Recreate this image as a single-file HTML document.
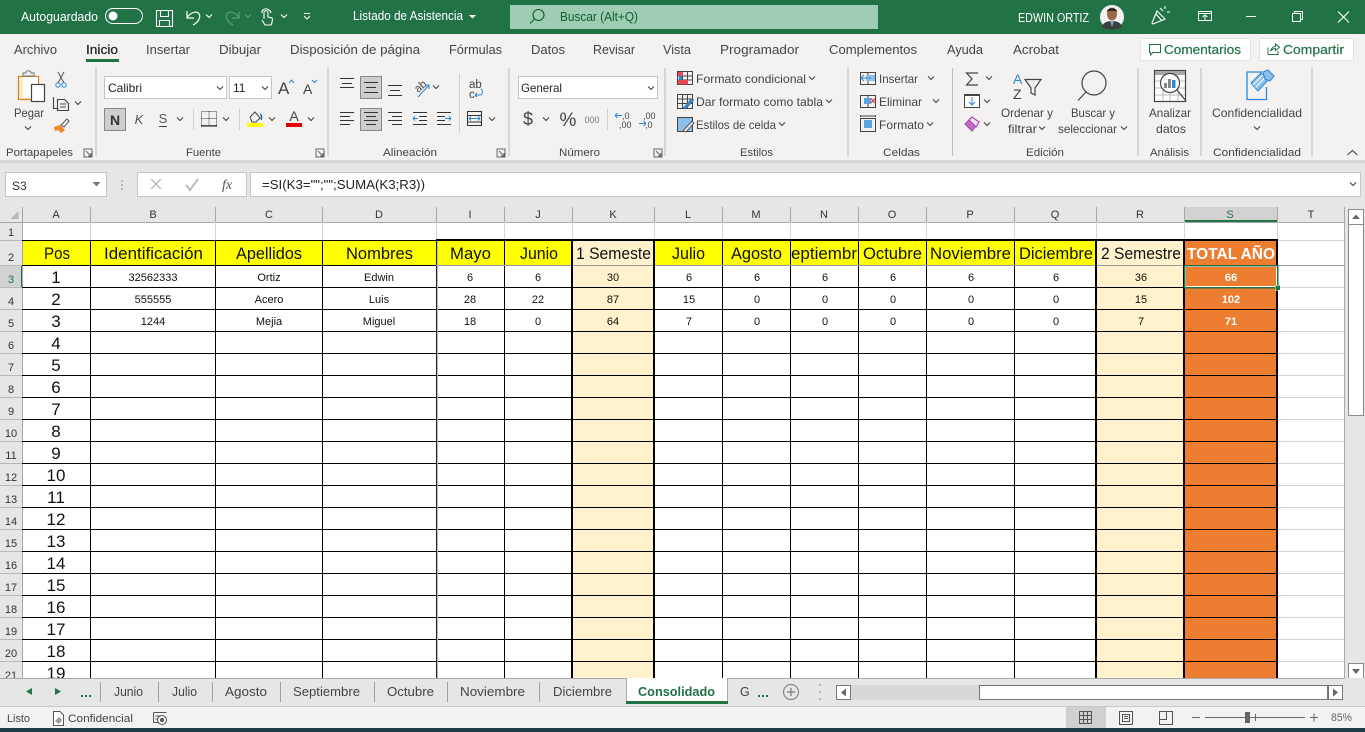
<!DOCTYPE html>
<html lang="es"><head><meta charset="utf-8"><title>Listado de Asistencia</title>
<style>
html,body{margin:0;padding:0;background:#f3f2f1;overflow:hidden}
svg{display:block;font-family:"Liberation Sans",sans-serif}
.r{font-size:12px;fill:#444}
.g{font-size:11px;fill:#444}
.t{font-size:12.5px;fill:#444}
.w{font-size:12.5px;fill:#fff}
.h{font-size:17px;fill:#111}
.d{font-size:11px;fill:#111;text-anchor:middle}
.n{font-size:17px;fill:#111;text-anchor:middle}
.c{font-size:11px;fill:#333;text-anchor:middle}
.s{font-size:12.5px;fill:#444}
</style></head><body>
<svg width="1365" height="732" viewBox="0 0 1365 732" xmlns="http://www.w3.org/2000/svg">
<defs>
<path id="ch" d="M-3 -1.5L0 1.5L3 -1.5" fill="none" stroke="#444" stroke-width="1.1"/>
<path id="chw" d="M-3 -1.5L0 1.5L3 -1.5" fill="none" stroke="#fff" stroke-width="1.1"/>
<path id="lau" d="M0 0H8V8H0ZM2 2L7 7M7 4V7H4" fill="none" stroke="#666" stroke-width="1"/>
<clipPath id="gc"><rect x="0" y="207" width="1345" height="471"/></clipPath>
</defs>

<!-- title bar -->
<rect width="1365" height="34" fill="#217346"/>
<text x="21" y="21" class="w" textLength="77" lengthAdjust="spacingAndGlyphs">Autoguardado</text>
<rect x="105.500" y="8.500" width="37" height="15" rx="7.500" fill="none" stroke="#fff"/>
<circle cx="113" cy="16" r="4.500" fill="#fff"/>
<path d="M156.500 10.500H172.500V26.500H156.500ZM160.500 10.500V16.500H168.500V10.500M159.500 26.500V20.500H169.500V26.500" fill="none" stroke="#fff" stroke-width="1.100"/>
<path d="M187 11V18H194M187 17.500C191 12 198 10 199.500 15C200.500 19 197 23 193 25" fill="none" stroke="#fff" stroke-width="1.200"/>
<use href="#chw" x="209" y="16"/>
<path d="M239 12V18H232M239 17.500C235 12 228 10 226.500 15C225.500 19 229 23 233 25" fill="none" stroke="#5f9e7b" stroke-width="1.200"/>
<path d="M245 14.500L248 17.500L251 14.500" fill="none" stroke="#5f9e7b"/>
<path d="M264 19V12.500C264 10 268 10 268 12.500V17L272 18C273 19 272 23 271 25H265L262 20M262 13C261 8 270 7 271 13" fill="none" stroke="#fff" stroke-width="1.100"/>
<use href="#chw" x="284" y="16"/>
<path d="M304 13.500H310M304 16L307 19L310 16" fill="none" stroke="#fff"/>
<text x="353" y="20" class="w" textLength="110" lengthAdjust="spacingAndGlyphs">Listado de Asistencia</text>
<path d="M469 15H476L472.500 18.500Z" fill="#fff"/>
<rect x="510" y="5" width="368" height="24" fill="#9fcdb3"/>
<circle cx="538.500" cy="15" r="5.500" fill="none" stroke="#0e5c2f" stroke-width="1.100"/>
<path d="M534.500 19L530 23.500" stroke="#0e5c2f" stroke-width="1.100"/>
<text x="560" y="21" style="font-size:12.5px;fill:#0e5c2f" textLength="78" lengthAdjust="spacingAndGlyphs">Buscar (Alt+Q)</text>
<text x="1018" y="22" class="w" textLength="71" lengthAdjust="spacingAndGlyphs">EDWIN ORTIZ</text>
<circle cx="1112" cy="17" r="12" fill="#f2f2f2"/>
<path d="M1102 27C1103 22 1108 21 1112 21C1116 21 1121 22 1122 27C1116 30 1108 30 1102 27Z" fill="#3d3f3f"/>
<path d="M1110 21L1112 27L1114 21Z" fill="#7aa3cf"/>
<ellipse cx="1112" cy="14" rx="5" ry="6.500" fill="#9a6a48"/>
<path d="M1107 12C1107 7 1117 7 1117 12C1114 10 1110 10 1107 12Z" fill="#1d1a18"/>
<path d="M1152 23L1157 11L1165 19L1153 24ZM1160 8L1163 11M1165 6V9M1167 12H1170M1156 14L1162 21" fill="none" stroke="#fff" stroke-width="1.100"/>
<path d="M1198.500 11.500H1211.500V20.500H1198.500ZM1198.500 13.500H1211.500M1205 20V15M1202.500 17L1205 15L1207.500 17" fill="none" stroke="#fff"/>
<path d="M1246 16.500H1256" stroke="#fff"/>
<path d="M1292.500 13.500H1300.500V21.500H1292.500ZM1294.500 13V11.500H1302.500V19.500H1301" fill="none" stroke="#fff"/>
<path d="M1338 11.500L1349 22.500M1349 11.500L1338 22.500" stroke="#fff" stroke-width="1.100"/>

<!-- ribbon -->
<rect y="34" width="1365" height="126" fill="#f3f2f1"/>
<rect y="160" width="1365" height="47" fill="#e6e6e6"/>
<rect y="160" width="1365" height="3" fill="#d6d6d6"/>
<g class="t">
<text x="14" y="54" textLength="43" lengthAdjust="spacingAndGlyphs">Archivo</text>
<text x="86" y="54" textLength="32" lengthAdjust="spacingAndGlyphs" style="fill:#222;stroke:#222;stroke-width:.25">Inicio</text>
<text x="146" y="54" textLength="44" lengthAdjust="spacingAndGlyphs">Insertar</text>
<text x="219" y="54" textLength="42" lengthAdjust="spacingAndGlyphs">Dibujar</text>
<text x="290" y="54" textLength="130" lengthAdjust="spacingAndGlyphs">Disposición de página</text>
<text x="449" y="54" textLength="53" lengthAdjust="spacingAndGlyphs">Fórmulas</text>
<text x="531" y="54" textLength="34" lengthAdjust="spacingAndGlyphs">Datos</text>
<text x="593" y="54" textLength="42" lengthAdjust="spacingAndGlyphs">Revisar</text>
<text x="663" y="54" textLength="28" lengthAdjust="spacingAndGlyphs">Vista</text>
<text x="720" y="54" textLength="79" lengthAdjust="spacingAndGlyphs">Programador</text>
<text x="829" y="54" textLength="88" lengthAdjust="spacingAndGlyphs">Complementos</text>
<text x="947" y="54" textLength="36" lengthAdjust="spacingAndGlyphs">Ayuda</text>
<text x="1013" y="54" textLength="46" lengthAdjust="spacingAndGlyphs">Acrobat</text>
</g>
<rect x="86" y="59" width="33" height="3" fill="#217346"/>
<rect x="1140.500" y="38.500" width="110" height="22" rx="1" fill="#fff" stroke="#e3e2e1"/>
<path d="M1149.500 44.500H1160.500V52.500H1153L1150.500 55V52.500H1149.500Z" fill="none" stroke="#217346"/>
<text x="1164" y="54" style="font-size:12.5px;fill:#217346;stroke:#217346;stroke-width:.2" textLength="77" lengthAdjust="spacingAndGlyphs">Comentarios</text>
<rect x="1259.500" y="38.500" width="94" height="22" rx="1" fill="#fff" stroke="#e3e2e1"/>
<path d="M1268 47.500V54.500H1278V51M1270.500 51C1271.500 48 1273.500 46.500 1275.500 46.500V44L1279.500 47.500L1275.500 50.500V48.500C1273.500 48.500 1272 49.500 1270.500 51Z" fill="none" stroke="#217346"/>
<text x="1283" y="54" style="font-size:12.5px;fill:#217346;stroke:#217346;stroke-width:.2" textLength="61" lengthAdjust="spacingAndGlyphs">Compartir</text>

<!-- group separators -->
<path d="M96 68V156M328 68V156M509 68V156M665 68V156M848 68V156M952.500 68V156M1138 68V156M1201 68V156M1312 68V156" stroke="#bdbcba" stroke-width="1"/>
<path d="M193.500 109V130M239.500 109V130M459.500 74V133M607.500 109V130" stroke="#d0cfcd"/>

<!-- Portapapeles -->
<rect x="18.500" y="76.500" width="20" height="23" fill="#fdeec5" stroke="#e07b1a" stroke-width="1.200"/>
<rect x="23" y="77" width="15" height="21" fill="#fff"/>
<path d="M23 76V73H26C26 70 31 70 31 73H34V76Z" fill="#f3f2f1" stroke="#777"/>
<rect x="31.500" y="84.500" width="13" height="17" fill="#fff" stroke="#444" stroke-width="1.200"/>
<text x="14" y="117" class="r" textLength="30" lengthAdjust="spacingAndGlyphs">Pegar</text>
<use href="#ch" x="28" y="128"/>
<path d="M58 72L64 83M64 72L58 83" stroke="#555"/>
<circle cx="58" cy="85" r="2.200" fill="none" stroke="#2b88d8"/><circle cx="64" cy="85" r="2.200" fill="none" stroke="#2b88d8"/>
<path d="M53.500 97V108.500H58.500M57.500 99.500H64.500L68.500 103.500V110.500H57.500ZM60 104H66M60 107H66" fill="none" stroke="#444" stroke-width="1.100"/>
<use href="#ch" x="78" y="103"/>
<path d="M54 127L60 125L65 130L61 133L58 130L55 131Z" fill="#f08a24"/>
<path d="M61 125L67 119L69 121L64 127Z" fill="#fff" stroke="#555"/>

<!-- Fuente -->
<rect x="104.500" y="76.500" width="122" height="22" fill="#fff" stroke="#c8c6c4"/>
<text x="108" y="92" class="r" textLength="34" lengthAdjust="spacingAndGlyphs" style="fill:#222">Calibri</text>
<use href="#ch" x="220" y="88"/>
<rect x="229.500" y="76.500" width="42" height="22" fill="#fff" stroke="#c8c6c4"/>
<text x="233" y="92" class="r" style="fill:#222">11</text>
<use href="#ch" x="265" y="88"/>
<text x="278" y="94" style="font-size:17px;fill:#444">A</text>
<path d="M289 83L291.500 80L294 83" fill="none" stroke="#2b88d8"/>
<text x="303" y="94" style="font-size:14px;fill:#444">A</text>
<path d="M312 80L314.500 82.500L317 80" fill="none" stroke="#2b88d8"/>
<rect x="104.500" y="108.500" width="21" height="22" fill="#cfcecc" stroke="#8a8886"/>
<text x="115" y="125" style="font-size:14px;font-weight:bold;fill:#333;text-anchor:middle">N</text>
<text x="139" y="124" style="font-size:13px;font-style:italic;fill:#555;text-anchor:middle">K</text>
<text x="163" y="123" style="font-size:13px;fill:#555;text-anchor:middle">S</text>
<path d="M159 126.500H167" stroke="#444"/>
<use href="#ch" x="180" y="119"/>
<path d="M201.500 111.500H216.500V125.500H201.500ZM209 111.500V125.500M201.500 118.500H216.500" fill="none" stroke="#444" stroke-dasharray="1 1"/>
<path d="M201 126H217" stroke="#111"/>
<use href="#ch" x="226" y="119"/>
<path d="M250 117L255 112L260 118L256 122H252Z" fill="none" stroke="#444"/>
<path d="M260 114C262 115 262 118 261 120" stroke="#2b6ca3" stroke-width="1.500" fill="none"/>
<rect x="247" y="123" width="16" height="4" fill="#ffff00"/>
<use href="#ch" x="272" y="119"/>
<text x="294" y="121" style="font-size:14px;fill:#444;text-anchor:middle">A</text>
<rect x="286" y="123" width="16" height="4" fill="#e60000"/>
<use href="#ch" x="311" y="119"/>
<use href="#lau" x="84" y="149"/><use href="#lau" x="316" y="149"/><use href="#lau" x="497" y="149"/><use href="#lau" x="654" y="149"/>

<!-- Alineación -->
<rect x="360.500" y="76.500" width="21" height="22" fill="#cfcecc" stroke="#8a8886"/>
<rect x="360.500" y="108.500" width="21" height="22" fill="#cfcecc" stroke="#8a8886"/>
<g stroke="#333" fill="none">
<path d="M340 78.500H354M342 83.500H352M340 87.500H354"/>
<path d="M364 82.500H378M366 87.500H376M364 92.500H378"/>
<path d="M388 85.500H402M390 90.500H400M388 95.500H402"/>
<path d="M340 112.500H354M340 116.500H350M340 120.500H354M340 124.500H350"/>
<path d="M364 112.500H378M366 116.500H376M364 120.500H378M366 124.500H376"/>
<path d="M388 112.500H402M392 116.500H402M388 120.500H402M392 124.500H402"/>
<path d="M419 116.500H427M419 120.500H427M413 112.500H427M413 124.500H427"/>
<path d="M437 116.500H445M437 120.500H445M437 112.500H451M437 124.500H451" transform="translate(0 0)"/>
<path d="M467.500 111.500H481.500V125.500H467.500ZM467.500 115.500H481.500M467.500 122H481.500"/>
</g>
<path d="M413 118.500H418M413 118.500L415 116.500M413 118.500L415 120.500M445 118.500H451M451 118.500L449 116.500M451 118.500L449 120.500M469 118.500H480M469 118.500L471 116.500M469 118.500L471 120.500M480 118.500L478 116.500M480 118.500L478 120.500" stroke="#2b88d8" fill="none"/>
<text x="414" y="90" transform="rotate(-40 420 86)" style="font-size:11px;fill:#444">ab</text>
<path d="M418 97L429 85M425 85H429V89" stroke="#2b88d8" fill="none"/>
<use href="#ch" x="436" y="87"/><use href="#ch" x="492" y="119"/>
<text x="469" y="88" style="font-size:11.500px;fill:#444">ab</text>
<text x="469" y="98" style="font-size:11.500px;fill:#444">c</text>
<path d="M475 95H480C483 95 483 90 481 89M475 95L477 93M475 95L477 97" stroke="#2b88d8" fill="none"/>

<!-- Número -->
<rect x="518.500" y="76.500" width="139" height="22" fill="#fff" stroke="#c8c6c4"/>
<text x="521" y="92" class="r" textLength="41" lengthAdjust="spacingAndGlyphs" style="fill:#222">General</text>
<use href="#ch" x="651" y="88"/>
<text x="528" y="125" style="font-size:18px;fill:#444;text-anchor:middle">$</text>
<use href="#ch" x="546" y="119"/>
<text x="568" y="126" style="font-size:19px;fill:#444;text-anchor:middle">%</text>
<text x="592" y="123" style="font-size:9px;fill:#777;text-anchor:middle">000</text>
<text x="622" y="119" style="font-size:9px;fill:#444">,0</text>
<text x="619" y="128" style="font-size:9px;fill:#444">,00</text>
<path d="M615 115.500H622M615 115.500L617.500 113M615 115.500L617.500 118" stroke="#2b88d8" fill="none"/>
<text x="643" y="119" style="font-size:9px;fill:#444">,00</text>
<text x="645" y="128" style="font-size:9px;fill:#444">,0</text>
<path d="M639 123.500H646M646 123.500L643.500 121M646 123.500L643.500 126" stroke="#2b88d8" fill="none"/>

<!-- Estilos -->
<path d="M677.500 71.500H692.500V84.500H677.500ZM677.500 76H692.500M677.500 80H692.500M682.500 71.500V84.500M687.500 71.500V84.500" fill="none" stroke="#444"/>
<rect x="678" y="72" width="5" height="4" fill="#e8484f"/><rect x="678" y="80" width="10" height="4.500" fill="#e8484f"/><rect x="679" y="76" width="3" height="4" fill="#2b88d8"/>
<path d="M677.500 94.500H692.500V108.500H677.500ZM677.500 99H692.500M677.500 103.500H692.500M682.500 94.500V108.500M687.500 94.500V108.500" fill="none" stroke="#444"/>
<path d="M683 108L692 98L694 100L686 109Z" fill="#2b88d8" stroke="#555" stroke-width=".5"/>
<rect x="677.500" y="117.500" width="15" height="14" fill="#8cc0ea" stroke="#444"/>
<path d="M683 131L692 121L694 123L686 132Z" fill="#f3f2f1" stroke="#555"/>
<text x="696" y="83" class="r" textLength="110" lengthAdjust="spacingAndGlyphs">Formato condicional</text><use href="#ch" x="812" y="78"/>
<text x="696" y="106" class="r" textLength="127" lengthAdjust="spacingAndGlyphs">Dar formato como tabla</text><use href="#ch" x="829" y="101"/>
<text x="696" y="129" class="r" textLength="80" lengthAdjust="spacingAndGlyphs">Estilos de celda</text><use href="#ch" x="782" y="124"/>

<!-- Celdas -->
<path d="M860.500 72.500H875.500V84.500H860.500ZM868 72.500V84.500" fill="none" stroke="#444"/>
<rect x="866" y="75" width="9" height="6" fill="#8cc0ea"/>
<path d="M861 78H871M861 78L864 75M861 78L864 81" stroke="#2b88d8" fill="none"/>
<path d="M860.500 95.500H875.500V107.500H860.500ZM868 95.500V107.500" fill="none" stroke="#444"/>
<rect x="864" y="98" width="7" height="6" fill="#5aa5e0"/>
<path d="M871 98.500L875 103M875 98.500L871 103" stroke="#e03b3b" stroke-width="1.200"/>
<path d="M860.500 118.500H875.500V131.500H860.500ZM860.500 115V117M875.500 115V117M861 116H875" fill="none" stroke="#444"/>
<rect x="864" y="120" width="8" height="8" fill="#5aa5e0"/>
<text x="879" y="83" class="r" textLength="39" lengthAdjust="spacingAndGlyphs">Insertar</text><use href="#ch" x="931" y="78"/>
<text x="879" y="106" class="r" textLength="43" lengthAdjust="spacingAndGlyphs">Eliminar</text><use href="#ch" x="936" y="101"/>
<text x="879" y="129" class="r" textLength="45" lengthAdjust="spacingAndGlyphs">Formato</text><use href="#ch" x="930" y="124"/>

<!-- Edición -->
<path d="M978 73H966.500L972 79L966.500 85H978" fill="none" stroke="#444" stroke-width="1.200"/>
<use href="#ch" x="989" y="78"/>
<rect x="964.500" y="94.500" width="15" height="13" fill="#fff" stroke="#444"/>
<path d="M964 95H980" stroke="#444" stroke-width="2"/>
<path d="M972 97V105M969 102L972 105L975 102" stroke="#2b88d8" fill="none"/>
<use href="#ch" x="987" y="101"/>
<path d="M965 124L972 117L979 122L972 131Z" fill="#c46bc8" stroke="#a03fa5"/>
<path d="M969 120L976 127L979 122L972 117Z" fill="#f2dcf2" stroke="#a03fa5"/>
<use href="#ch" x="987" y="124"/>
<text x="1013" y="84" style="font-size:14px;fill:#2b88d8">A</text>
<text x="1013" y="99" style="font-size:14px;fill:#444">Z</text>
<path d="M1025 79.500H1041L1035 88V95L1031 93V88Z" fill="none" stroke="#444" stroke-width="1.200"/>
<text x="1001" y="117" class="r" textLength="52" lengthAdjust="spacingAndGlyphs">Ordenar y</text>
<text x="1008" y="133" class="r" textLength="29" lengthAdjust="spacingAndGlyphs">filtrar</text><use href="#ch" x="1042" y="128"/>
<circle cx="1094" cy="83" r="12" fill="none" stroke="#444" stroke-width="1.200"/>
<path d="M1086 92L1078 100.500" stroke="#444" stroke-width="1.200"/>
<text x="1071" y="117" class="r" textLength="44" lengthAdjust="spacingAndGlyphs">Buscar y</text>
<text x="1058" y="133" class="r" textLength="59" lengthAdjust="spacingAndGlyphs">seleccionar</text><use href="#ch" x="1124" y="128"/>

<!-- Análisis -->
<rect x="1154.500" y="70.500" width="31" height="31" fill="#fff" stroke="#444" stroke-width="1.200"/>
<rect x="1155" y="71" width="30" height="4" fill="#a6a6a6"/>
<path d="M1155 81H1185M1155 88H1185M1155 95H1185M1163 75V101M1170 75V101M1178 75V101" stroke="#bbb"/>
<circle cx="1170" cy="83" r="9.500" fill="#fff" stroke="#444" stroke-width="1.200"/>
<rect x="1164" y="83" width="3" height="5" fill="#888"/><rect x="1168" y="79" width="3" height="9" fill="#888"/><rect x="1172" y="80" width="3.500" height="8" fill="#2b88d8"/>
<path d="M1177 90L1186 101" stroke="#444" stroke-width="1.300"/>
<text x="1149" y="117" class="r" textLength="42" lengthAdjust="spacingAndGlyphs">Analizar</text>
<text x="1156" y="133" class="r" textLength="30" lengthAdjust="spacingAndGlyphs">datos</text>

<!-- Confidencialidad -->
<path d="M1262 72H1247V99.500H1266.500V87" fill="none" stroke="#2b88d8" stroke-width="1.300"/>
<path d="M1251 83L1261 73L1268 80L1258 91Z" fill="#8cc0ea" stroke="#2b88d8"/>
<path d="M1253 85L1263 75M1255.500 87.500L1265.500 77" stroke="#fff"/>
<path d="M1263 72L1268 70L1274 76L1270 81L1265 79Z" fill="#8cc0ea" stroke="#2b88d8"/>
<text x="1212" y="117" class="r" textLength="90" lengthAdjust="spacingAndGlyphs">Confidencialidad</text>
<use href="#ch" x="1257" y="128"/>
<path d="M1347.500 155L1352.500 150.500L1357.500 155" fill="none" stroke="#444" stroke-width="1.100"/>

<!-- group labels -->
<g class="g">
<text x="6" y="156" textLength="67" lengthAdjust="spacingAndGlyphs">Portapapeles</text>
<text x="186" y="156" textLength="35" lengthAdjust="spacingAndGlyphs">Fuente</text>
<text x="383" y="156" textLength="54" lengthAdjust="spacingAndGlyphs">Alineación</text>
<text x="559" y="156" textLength="41" lengthAdjust="spacingAndGlyphs">Número</text>
<text x="740" y="156" textLength="33" lengthAdjust="spacingAndGlyphs">Estilos</text>
<text x="883" y="156" textLength="37" lengthAdjust="spacingAndGlyphs">Celdas</text>
<text x="1026" y="156" textLength="38" lengthAdjust="spacingAndGlyphs">Edición</text>
<text x="1150" y="156" textLength="39" lengthAdjust="spacingAndGlyphs">Análisis</text>
<text x="1213" y="156" textLength="88" lengthAdjust="spacingAndGlyphs">Confidencialidad</text>
</g>

<!-- formula bar -->
<rect x="5.500" y="172.500" width="101" height="24" fill="#fff" stroke="#c6c6c6"/>
<text x="12" y="190" class="r" style="fill:#333">S3</text>
<path d="M92.500 182H100.500L96.500 186.500Z" fill="#777"/>
<path d="M122 180v2M122 184v2M122 188v2" stroke="#aaa" stroke-width="1.500"/>
<rect x="137.500" y="172.500" width="109" height="24" fill="#fff" stroke="#c6c6c6"/>
<path d="M151 179L161 189M161 179L151 189" stroke="#bdbdbd" stroke-width="1.500"/>
<path d="M186 185L190 190L198 179" fill="none" stroke="#bdbdbd" stroke-width="2"/>
<text x="222" y="189" style="font-family:'Liberation Serif',serif;font-style:italic;font-size:14px;fill:#555">fx</text>
<rect x="250.500" y="172.500" width="1110" height="24" fill="#fff" stroke="#c6c6c6"/>
<text x="262" y="189" style="font-size:12.5px;fill:#222" textLength="163" lengthAdjust="spacingAndGlyphs">=SI(K3="";"";SUMA(K3;R3))</text>
<use href="#ch" x="1353" y="184"/>

<!-- grid -->
<g clip-path="url(#gc)">
<rect x="22" y="222" width="1323" height="456" fill="#fff"/>
<rect x="0" y="207" width="1345" height="15" fill="#e6e6e6"/>
<rect x="0" y="207" width="22" height="471" fill="#e6e6e6"/>
<path d="M18.500 211V219H10.500Z" fill="#b9b9b9"/>
<rect x="1184" y="207" width="94" height="15" fill="#d2d2d2"/>
<rect x="1184" y="220" width="94" height="2" fill="#217346"/>
<rect x="0" y="265" width="22" height="22" fill="#d2d2d2"/>
<rect x="21" y="265" width="2" height="22" fill="#217346"/>
<!-- fills -->
<rect x="22" y="240" width="550" height="25" fill="#ffff00"/>
<rect x="654" y="240" width="442" height="25" fill="#ffff00"/>
<rect x="572" y="240" width="82" height="438" fill="#fff2cc"/>
<rect x="1096" y="240" width="88" height="438" fill="#fff2cc"/>
<rect x="1184" y="240" width="93" height="438" fill="#ed7d31"/>
<g shape-rendering="crispEdges" fill="none">
<!-- header dividers -->
<path d="M90.500 207V222M215.500 207V222M322.500 207V222M436.500 207V222M504.500 207V222M572.500 207V222M654.500 207V222M722.500 207V222M790.500 207V222M858.500 207V222M926.500 207V222M1014.500 207V222M1096.500 207V222M1184.500 207V222M1277.500 207V222M0 222.500H1345M22.500 207V678" stroke="#a8a8a8"/>
<path d="M0 240.500H22M0 265.500H22M0 287.500H22M0 309.500H22M0 331.500H22M0 353.500H22M0 375.500H22M0 397.500H22M0 419.500H22M0 441.500H22M0 463.500H22M0 485.500H22M0 507.500H22M0 529.500H22M0 551.500H22M0 573.500H22M0 595.500H22M0 617.500H22M0 639.500H22M0 661.500H22" stroke="#b8b8b8"/>
<!-- light gridlines -->
<path d="M90.500 222V240M215.500 222V240M322.500 222V240M436.500 222V240M504.500 222V240M572.500 222V240M654.500 222V240M722.500 222V240M790.500 222V240M858.500 222V240M926.500 222V240M1014.500 222V240M1096.500 222V240M1184.500 222V240M1277.500 222V678" stroke="#d4d4d4"/>
<path d="M1277 240.500H1345M1277 287.500H1345M1277 309.500H1345M1277 331.500H1345M1277 353.500H1345M1277 375.500H1345M1277 397.500H1345M1277 419.500H1345M1277 441.500H1345M1277 463.500H1345M1277 485.500H1345M1277 507.500H1345M1277 529.500H1345M1277 551.500H1345M1277 573.500H1345M1277 595.500H1345M1277 617.500H1345M1277 639.500H1345M1277 661.500H1345" stroke="#d4d4d4"/>
<path d="M1344.500 207V678" stroke="#a8a8a8"/>
<!-- black grid -->
<path d="M22 287.500H1277M22 309.500H1277M22 331.500H1277M22 353.500H1277M22 375.500H1277M22 397.500H1277M22 419.500H1277M22 441.500H1277M22 463.500H1277M22 485.500H1277M22 507.500H1277M22 529.500H1277M22 551.500H1277M22 573.500H1277M22 595.500H1277M22 617.500H1277M22 639.500H1277M22 661.500H1277" stroke="#000"/>
<path d="M22 240.500H436M22 265.500H436" stroke="#000"/>
<path d="M90.500 240V678M215.500 240V678M322.500 240V678M504.500 240V678M722.500 240V678M790.500 240V678M858.500 240V678M926.500 240V678M1014.500 240V678" stroke="#000"/>
<path d="M436.500 240V678" stroke="#222"/>
<path d="M437.500 240V678" stroke="#bbb"/>
<path d="M436 265.500H1345" stroke="#999"/>
<path d="M572 240V678M654 240V678M1096 240V678M1184 240V678" stroke="#000" stroke-width="2"/>
<path d="M1277 240V678" stroke="#000" stroke-width="2"/>
<path d="M436 240H1278" stroke="#000" stroke-width="2"/>
<!-- selection -->
<rect x="1185.500" y="266.500" width="91" height="20" stroke="#fff"/>
<rect x="1184.500" y="265.500" width="93" height="22" stroke="#217346" stroke-width="1.500"/>
<rect x="1275" y="285" width="5" height="5" fill="#217346" stroke="#fff" stroke-width=".5"/>
</g>
<!-- column letters -->
<g class="c">
<text x="56" y="218">A</text><text x="153" y="218">B</text><text x="269" y="218">C</text><text x="379" y="218">D</text><text x="470" y="218">I</text><text x="538" y="218">J</text><text x="613" y="218">K</text><text x="688" y="218">L</text><text x="756" y="218">M</text><text x="824" y="218">N</text><text x="892" y="218">O</text><text x="970" y="218">P</text><text x="1055" y="218">Q</text><text x="1140" y="218">R</text><text x="1230" y="218" style="fill:#217346">S</text><text x="1311" y="218">T</text>
</g>
<!-- row numbers -->
<g class="c">
<text x="11" y="236">1</text><text x="11" y="261">2</text><text x="11" y="283" style="fill:#217346">3</text><text x="11" y="305">4</text><text x="11" y="327">5</text><text x="11" y="349">6</text><text x="11" y="371">7</text><text x="11" y="393">8</text><text x="11" y="415">9</text><text x="11" y="437">10</text><text x="11" y="459">11</text><text x="11" y="481">12</text><text x="11" y="503">13</text><text x="11" y="525">14</text><text x="11" y="547">15</text><text x="11" y="569">16</text><text x="11" y="591">17</text><text x="11" y="613">18</text><text x="11" y="635">19</text><text x="11" y="657">20</text><text x="11" y="679">21</text>
</g>
<!-- header labels -->
<g class="h">
<text x="44" y="259" textLength="26" lengthAdjust="spacingAndGlyphs">Pos</text>
<text x="104" y="259" textLength="99" lengthAdjust="spacingAndGlyphs">Identificación</text>
<text x="236" y="259" textLength="66" lengthAdjust="spacingAndGlyphs">Apellidos</text>
<text x="346" y="259" textLength="67" lengthAdjust="spacingAndGlyphs">Nombres</text>
<text x="450" y="259" textLength="41" lengthAdjust="spacingAndGlyphs">Mayo</text>
<text x="520" y="259" textLength="38" lengthAdjust="spacingAndGlyphs">Junio</text>
<text x="576" y="259" textLength="75" lengthAdjust="spacingAndGlyphs">1 Semeste</text>
<text x="672" y="259" textLength="33" lengthAdjust="spacingAndGlyphs">Julio</text>
<text x="731" y="259" textLength="51" lengthAdjust="spacingAndGlyphs">Agosto</text>
<text x="791" y="259" textLength="66" lengthAdjust="spacingAndGlyphs">eptiembr</text>
<text x="863" y="259" textLength="59" lengthAdjust="spacingAndGlyphs">Octubre</text>
<text x="930" y="259" textLength="81" lengthAdjust="spacingAndGlyphs">Noviembre</text>
<text x="1019" y="259" textLength="74" lengthAdjust="spacingAndGlyphs">Diciembre</text>
<text x="1101" y="259" textLength="80" lengthAdjust="spacingAndGlyphs">2 Semestre</text>
<text x="1187" y="259" textLength="88" lengthAdjust="spacingAndGlyphs" style="fill:#fff;font-weight:bold;font-size:16px">TOTAL AÑO</text>
</g>
<!-- position numbers -->
<g class="n">
<text x="56" y="283">1</text><text x="56" y="305">2</text><text x="56" y="327">3</text><text x="56" y="349">4</text><text x="56" y="371">5</text><text x="56" y="393">6</text><text x="56" y="415">7</text><text x="56" y="437">8</text><text x="56" y="459">9</text><text x="56" y="481">10</text><text x="56" y="503">11</text><text x="56" y="525">12</text><text x="56" y="547">13</text><text x="56" y="569">14</text><text x="56" y="591">15</text><text x="56" y="613">16</text><text x="56" y="635">17</text><text x="56" y="657">18</text><text x="56" y="679">19</text>
</g>
<!-- data -->
<g class="d">
<text x="153" y="281">32562333</text><text x="269" y="281">Ortiz</text><text x="379" y="281">Edwin</text><text x="470" y="281">6</text><text x="538" y="281">6</text><text x="613" y="281">30</text><text x="689" y="281">6</text><text x="757" y="281">6</text><text x="825" y="281">6</text><text x="893" y="281">6</text><text x="971" y="281">6</text><text x="1056" y="281">6</text><text x="1141" y="281">36</text>
<text x="153" y="303">555555</text><text x="269" y="303">Acero</text><text x="379" y="303">Luis</text><text x="470" y="303">28</text><text x="538" y="303">22</text><text x="613" y="303">87</text><text x="689" y="303">15</text><text x="757" y="303">0</text><text x="825" y="303">0</text><text x="893" y="303">0</text><text x="971" y="303">0</text><text x="1056" y="303">0</text><text x="1141" y="303">15</text>
<text x="153" y="325">1244</text><text x="269" y="325">Mejia</text><text x="379" y="325">Miguel</text><text x="470" y="325">18</text><text x="538" y="325">0</text><text x="613" y="325">64</text><text x="689" y="325">7</text><text x="757" y="325">0</text><text x="825" y="325">0</text><text x="893" y="325">0</text><text x="971" y="325">0</text><text x="1056" y="325">0</text><text x="1141" y="325">7</text>
</g>
<g class="d" style="fill:#fff;font-weight:bold">
<text x="1231" y="281">66</text><text x="1231" y="303">102</text><text x="1231" y="325">71</text>
</g>
</g>

<!-- vertical scrollbar -->
<rect x="1345" y="207" width="20" height="471" fill="#e6e6e6"/>
<rect x="1348.500" y="209.500" width="15" height="15" fill="#fff" stroke="#8a8a8a"/>
<path d="M1352 219H1360L1356 214.500Z" fill="#666"/>
<rect x="1348.500" y="224.500" width="15" height="191" fill="#fff" stroke="#8a8a8a"/>
<rect x="1348.500" y="663.500" width="15" height="15" fill="#fff" stroke="#8a8a8a"/>
<path d="M1352 669H1360L1356 674Z" fill="#666"/>

<!-- sheet tabs -->
<rect y="678" width="1365" height="28" fill="#e6e6e6"/>
<path d="M0 678.500H1345" stroke="#a8a8a8"/>
<path d="M0 706.500H1365" stroke="#c8c8c8"/>
<path d="M32 688V695L26 691.500Z" fill="#217346"/>
<path d="M55 688V695L61 691.500Z" fill="#217346"/>
<path d="M81 695h2v2h-2zM85 695h2v2h-2zM89 695h2v2h-2z" fill="#217346"/>
<path d="M100.500 682V702M158.500 682V702M212.500 682V702M280.500 682V702M374.500 682V702M447.500 682V702M539.500 682V702" stroke="#a0a0a0"/>
<g class="s">
<text x="114" y="696" textLength="29" lengthAdjust="spacingAndGlyphs">Junio</text>
<text x="172" y="696" textLength="25" lengthAdjust="spacingAndGlyphs">Julio</text>
<text x="225" y="696" textLength="42" lengthAdjust="spacingAndGlyphs">Agosto</text>
<text x="293" y="696" textLength="67" lengthAdjust="spacingAndGlyphs">Septiembre</text>
<text x="387" y="696" textLength="47" lengthAdjust="spacingAndGlyphs">Octubre</text>
<text x="460" y="696" textLength="65" lengthAdjust="spacingAndGlyphs">Noviembre</text>
<text x="553" y="696" textLength="59" lengthAdjust="spacingAndGlyphs">Diciembre</text>
<text x="740" y="696" textLength="9">G</text>
</g>
<rect x="626" y="678" width="102" height="25" fill="#fff"/>
<path d="M626.500 678V703M727.500 678V703" stroke="#a8a8a8"/>
<rect x="626" y="701" width="102" height="3" fill="#217346"/>
<text x="638" y="696" style="font-size:12.500px;font-weight:bold;fill:#217346" textLength="77" lengthAdjust="spacingAndGlyphs">Consolidado</text>
<path d="M758 695h2v2h-2zM762 695h2v2h-2zM766 695h2v2h-2z" fill="#217346"/>
<circle cx="791" cy="692" r="7.500" fill="none" stroke="#8a8a8a" stroke-width="1.200"/>
<path d="M787 692H795M791 688V696" stroke="#8a8a8a" stroke-width="1.500"/>
<path d="M820 684v2M820 691v2M820 698v2" stroke="#b5b5b5" stroke-width="2"/>
<rect x="836.500" y="685.500" width="14" height="14" fill="#fff" stroke="#777"/>
<path d="M846 688.500V696.500L841 692.500Z" fill="#666"/>
<rect x="851" y="685" width="128" height="15" fill="#d8d8d8"/>
<rect x="979.500" y="685.500" width="348" height="14" fill="#fff" stroke="#777"/>
<rect x="1328.500" y="685.500" width="14" height="14" fill="#fff" stroke="#777"/>
<path d="M1333 688.500V696.500L1338 692.500Z" fill="#666"/>

<!-- status bar -->
<rect y="707" width="1365" height="21" fill="#f3f2f1"/>
<rect y="728" width="1365" height="4" fill="#1f3b48"/>
<text x="7" y="722" class="g" textLength="23" lengthAdjust="spacingAndGlyphs">Listo</text>
<path d="M53.500 711.500H60L63.500 715V725.500H53.500Z" fill="#fff" stroke="#555"/>
<path d="M55 721L59 717L62 720L59 724Z" fill="#999"/>
<text x="68" y="722" class="g" textLength="65" lengthAdjust="spacingAndGlyphs">Confidencial</text>
<path d="M153.500 712.500H166.500M153.500 712.500V722.500H159M155.500 716H160M155.500 719H158" fill="none" stroke="#555"/>
<circle cx="162" cy="720" r="4.500" fill="none" stroke="#555"/><circle cx="162" cy="720" r="2" fill="#555"/>
<rect x="1066" y="707" width="40" height="21" fill="#d2d0ce"/>
<path d="M1079.500 711.500H1091.500V723.500H1079.500ZM1079.500 715.500H1091.500M1079.500 719.500H1091.500M1083.500 711.500V723.500M1087.500 711.500V723.500" fill="none" stroke="#555"/>
<path d="M1119.500 711.500H1132.500V724.500H1119.500ZM1122.500 714.500H1129.500V721.500H1122.500ZM1124 716.500H1128M1124 718.500H1128" fill="none" stroke="#555"/>
<path d="M1159.500 711.500H1172.500V724.500H1159.500ZM1159.500 719.500H1166.500V711.500" fill="none" stroke="#555"/>
<path d="M1192 717.500H1200M1205 717.500H1305M1310 717.500H1318M1314 713.500V721.500M1255.500 714V721" stroke="#666"/>
<rect x="1245" y="712" width="5" height="11" fill="#666"/>
<text x="1331" y="721" class="g" style="fill:#666" textLength="21" lengthAdjust="spacingAndGlyphs">85%</text>
</svg>
</body></html>
